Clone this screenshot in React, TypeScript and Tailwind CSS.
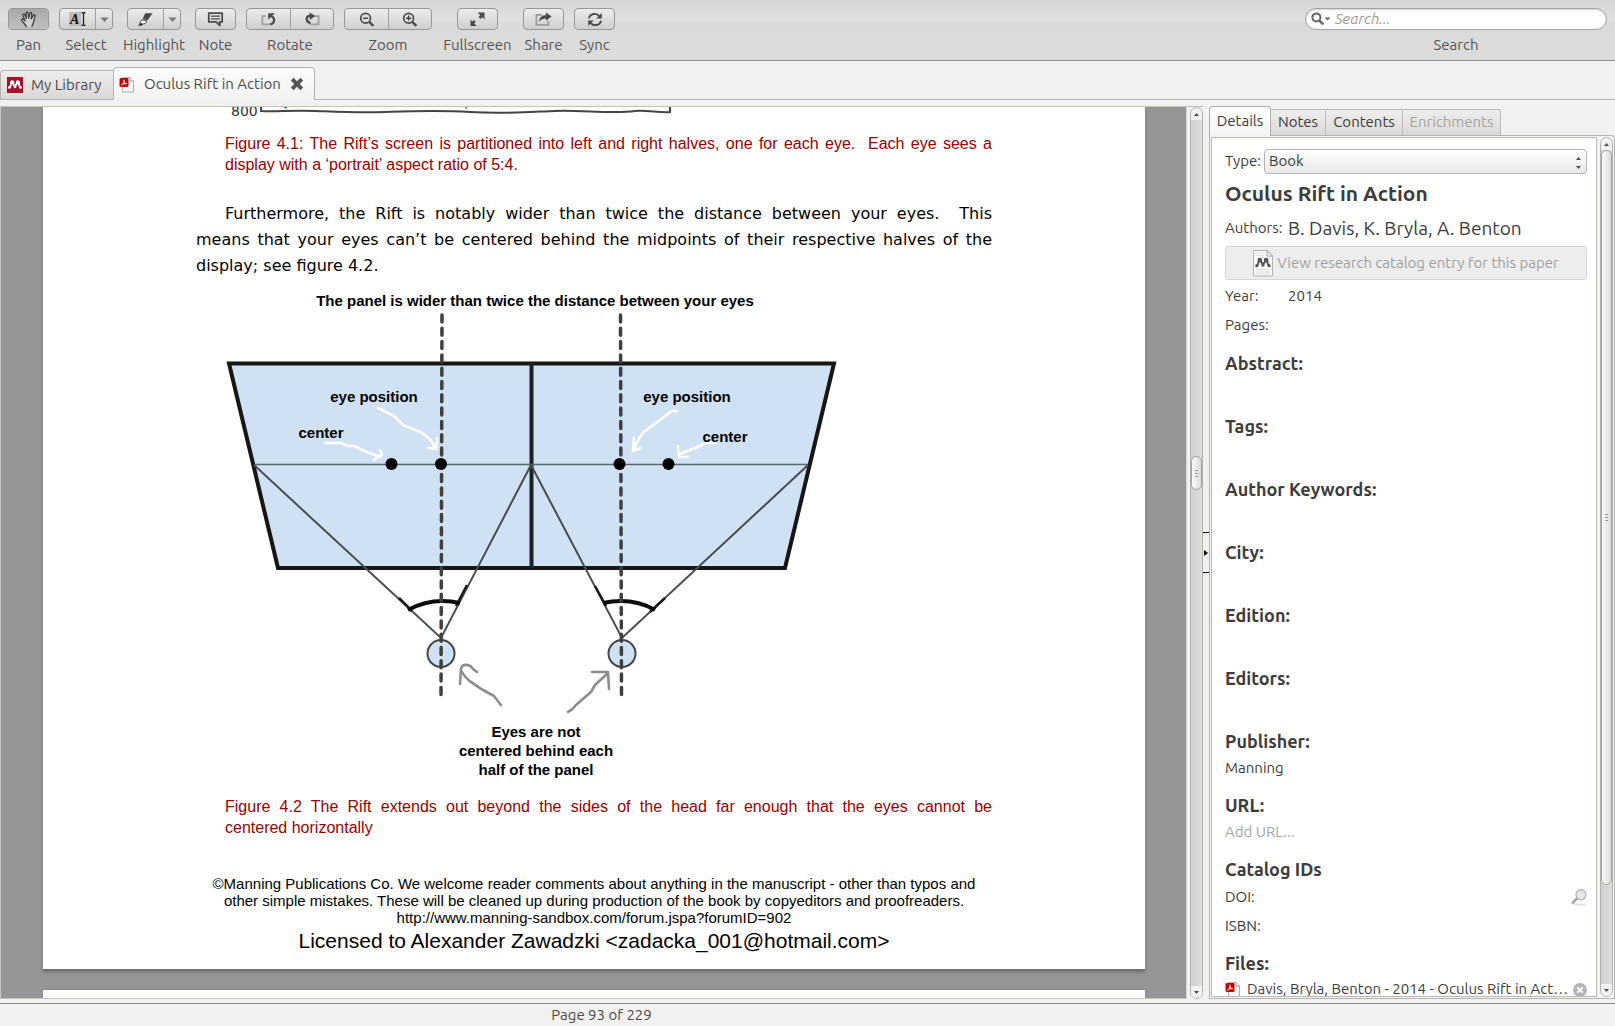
import React from "react";

const ink = "#4a4a4a";

function Caret() {
  return (
    <svg width="9" height="5" viewBox="0 0 9 5" aria-hidden="true">
      <path d="M0.5 0.5h8L4.5 5z" fill="#7a7a7a" />
    </svg>
  );
}

function PanIcon() {
  return (
    <svg width="18" height="17" viewBox="0 0 18 17" fill="none" stroke="#3f3f3f" strokeWidth="1.3" strokeLinecap="round" strokeLinejoin="round">
      <path
        d="M6.2 15.5C5.8 13.6 3.6 12 2 9.8C0.9 8.3 2.2 7.4 3.4 8.4L5 9.8L3 4.4C2.6 2.9 4.2 2.5 4.7 3.8L6.4 7.6L6 2.3C6 0.8 7.8 0.7 8 2.2L8.8 7.2L9.8 2.2C10.2 0.8 11.9 1.1 11.7 2.6L11.2 7.8L13.4 4.2C14.2 3 15.7 3.9 15.1 5.2C14 7.6 14.2 9.2 13.6 11C13.2 12.4 12.2 13.4 12 15.5"
        fill="#d2d2d2"
      />
    </svg>
  );
}

function SelectIcon() {
  return (
    <svg width="18" height="16" viewBox="0 0 18 16" aria-hidden="true">
      <rect x="0" y="1" width="12" height="14" fill="#bdbdbd" />
      <text x="1" y="13" fontFamily="Liberation Serif, serif" fontSize="14" fontWeight="700" fontStyle="italic" fill="#111">A</text>
      <path d="M12.5 1.5c1.5 0 2 .4 2 1.2c0-.8.5-1.2 2-1.2M14.5 2.5v11M12.5 14.5c1.5 0 2-.4 2-1.2c0 .8.5 1.2 2 1.2" fill="none" stroke="#222" strokeWidth="1.3" />
    </svg>
  );
}

function HighlightIcon() {
  return (
    <svg width="17" height="15" viewBox="0 0 17 15" aria-hidden="true">
      <path d="M8.2 1.2h7.3L10.6 8.2L5.6 7z" fill="#4a4a4a" />
      <path d="M5 7.8l5 1.2l-1.8 2.6L5 12.2L2.6 11z" fill="#fafafa" stroke="#4a4a4a" strokeWidth="1" />
      <path d="M1 13.8l2.6-3l2.4 1.6l-1.5 1.4z" fill="#333" />
    </svg>
  );
}

function NoteIcon() {
  return (
    <svg width="17" height="15" viewBox="0 0 17 15" fill="none" stroke={ink}>
      <path d="M1.8 1.2h13.4v8.6h-2.4v3.6L9.2 9.8H1.8z" strokeWidth="1.8" strokeLinejoin="round" />
      <path d="M4 4.2h9M4 6.8h9" strokeWidth="1.2" />
    </svg>
  );
}

function RotateLeftIcon() {
  return (
    <svg width="15" height="14" viewBox="0 0 15 14" fill="none">
      <path d="M5 4.2H1.4v8.2h8.2V11" stroke="#a0a0a0" strokeWidth="1.8" />
      <path d="M9.5 12.4c4.4-1 5-6.6.6-8.4" stroke={ink} strokeWidth="2.2" />
      <path d="M7.2 1.2h6.6L7.2 7.8z" fill={ink} />
    </svg>
  );
}

function RotateRightIcon() {
  return (
    <svg width="15" height="14" viewBox="0 0 15 14" fill="none">
      <path d="M10 4.2h3.6v8.2H5.4V11" stroke="#a0a0a0" strokeWidth="1.8" />
      <path d="M5.4 11C0.6 10 0.4 4.2 5 3.6" stroke={ink} strokeWidth="2.2" />
      <path d="M4.6 0.4L10.4 4L4.6 8z" fill={ink} />
    </svg>
  );
}

function ZoomIcon({ plus }: { plus?: boolean }) {
  return (
    <svg width="16" height="15" viewBox="0 0 16 15" fill="none" stroke={ink}>
      <circle cx="6.6" cy="6.2" r="4.9" strokeWidth="1.7" />
      <path d="M10.2 9.8l4.2 4" strokeWidth="2.4" />
      <path d={plus ? "M4 6.2h5.2M6.6 3.6v5.2" : "M4 6.2h5.2"} strokeWidth="1.5" />
    </svg>
  );
}

function FullscreenIcon() {
  return (
    <svg width="15" height="15" viewBox="0 0 15 15" fill={ink}>
      <path d="M7.5 0.5h7v7l-2.2-2.2l-1.8 1.8l-2-2l1.8-1.8z" />
      <path d="M0.5 7.8l1.8 1.8l1.6-1.6l1.8 1.8L4.2 11.4l2.4 2.6H0.5z" />
    </svg>
  );
}

function ShareIcon() {
  return (
    <svg width="17" height="14" viewBox="0 0 17 14" fill="none">
      <path d="M6.5 3H1.4v9.8h12V9" stroke="#9c9c9c" strokeWidth="1.8" />
      <path d="M4.2 10C4.4 5.6 6.6 3.2 11 3V0.4L16.6 4.6L11 8.8V6.4C8 6.4 6 7.2 4.2 10z" fill={ink} />
    </svg>
  );
}

function SyncIcon() {
  return (
    <svg width="16" height="15" viewBox="0 0 16 15" fill="none">
      <path d="M2 6.4C2.8 1.4 9.4 0.4 12.4 4.2M14 8.6C13.2 13.6 6.6 14.6 3.6 10.8" stroke={ink} strokeWidth="1.9" />
      <path d="M14.8 1v5.4H9.2zM1.2 14V8.6h5.6z" fill={ink} />
    </svg>
  );
}

type ToolProps = { label: string; width: string; children: React.ReactNode };

function Tool({ label, width, children }: ToolProps) {
  return (
    <div className={"flex flex-col items-center gap-[5px] " + width}>
      <div className="flex h-[22px] overflow-hidden rounded-[4px] border border-[#979797] bg-gradient-to-b from-[#ececec] to-[#cfcfcf]">{children}</div>
      <span className="text-[15px] leading-5 whitespace-nowrap text-[#555]">{label}</span>
    </div>
  );
}

function ToolButton({ label, width = "w-[39px]", pressed, children }: { label: string; width?: string; pressed?: boolean; children: React.ReactNode }) {
  return (
    <button
      aria-label={label}
      aria-pressed={pressed}
      className={"flex items-center justify-center border-l border-[#a0a0a0] first:border-l-0 " + width + (pressed ? " bg-gradient-to-b from-[#a9a9a9] to-[#bfbfbf]" : "")}
    >
      {children}
    </button>
  );
}

function PdfIcon() {
  return (
    <svg width="16" height="17" viewBox="0 0 16 17" aria-hidden="true" className="shrink-0">
      <path d="M3.5 1.5h7.5l3.5 3.5v11h-11z" fill="#f4f8f8" stroke="#9db5b8" />
      <path d="M11 1.5V5h3.5" fill="#fff" stroke="#7fa0a5" />
      <rect x="0.5" y="2" width="9" height="9" rx="1.4" fill="#c80000" />
      <path d="M2.4 9.2C4 8.6 5.4 6 4.9 3.8C5 6.4 6.4 7.8 7.8 7.8C5.8 7.4 3.8 7.8 2.4 9.2z" fill="#fff" stroke="#fff" strokeWidth="0.7" />
    </svg>
  );
}

function MendeleyMark({ fill }: { fill: string }) {
  return (
    <g fill={fill}>
      <circle cx="5.2" cy="5.4" r="2.1" />
      <circle cx="10.8" cy="5.4" r="2.1" />
      <circle cx="8" cy="10" r="1.3" />
      <circle cx="2.5" cy="10.4" r="1.4" />
      <circle cx="13.5" cy="10.4" r="1.4" />
      <path d="M2.6 10.4C4.4 9.4 3.4 7.6 4.4 6M13.4 10.4C11.6 9.4 12.6 7.6 11.6 6M6 6.2L8 9.8M10 6.2L8 9.8" fill="none" stroke={fill} strokeWidth="1.8" strokeLinecap="round" />
    </g>
  );
}

function LibraryIcon() {
  return (
    <svg width="16" height="16" viewBox="0 0 16 16" aria-hidden="true">
      <rect width="16" height="16" fill="#a6122d" />
      <MendeleyMark fill="#fff" />
    </svg>
  );
}

function CatalogIcon() {
  return (
    <svg width="20" height="27" viewBox="0 0 20 27" aria-hidden="true">
      <path d="M0.5 0.5h13.5l5.5 5.5v20H0.5z" fill="#fafafa" stroke="#b2b2b2" />
      <path d="M14 0.5V6h5.5z" fill="#fff" stroke="#999" />
      <path d="M3 3h9M3 5.5h9M3 19.5h14M3 22h14M3 24h14" stroke="#ddd" />
      <g transform="translate(1 4) scale(1.12)">
        <MendeleyMark fill="#555" />
      </g>
    </svg>
  );
}

function Arrow({ up }: { up?: boolean }) {
  return (
    <svg width="5" height="3" viewBox="0 0 5 3" aria-hidden="true">
      <path d={up ? "M0 3L2.5 0L5 3z" : "M0 0h5L2.5 3z"} fill="#4d4d4d" />
    </svg>
  );
}

function Scrollbar({ before, thumb, after }: { before: string; thumb: string; after: string }) {
  return (
    <div className="flex w-[13px] shrink-0 flex-col overflow-hidden rounded-full border border-[#b5b1ad] bg-gradient-to-r from-[#d2d0ce] to-[#e0dedc]">
      <button aria-label="Scroll up" className="flex h-3 shrink-0 items-center justify-center bg-[#f3f2f1]">
        <Arrow up />
      </button>
      <div className={before} />
      <div className={"flex shrink-0 flex-col items-center justify-center gap-[2px] rounded-full border border-[#a6a29e] bg-gradient-to-r from-[#fbfbfb] to-[#dedcda] " + thumb}>
        <i className="h-px w-[3px] bg-[#999]" />
        <i className="h-px w-[3px] bg-[#999]" />
        <i className="h-px w-[3px] bg-[#999]" />
      </div>
      <div className={after} />
      <button aria-label="Scroll down" className="flex h-3 shrink-0 items-center justify-center bg-[#f3f2f1]">
        <Arrow />
      </button>
    </div>
  );
}

function Toolbar() {
  return (
    <header className="flex h-[61px] shrink-0 justify-between border-b border-[#8c8c9a] bg-[linear-gradient(#d6d6d6_0px,#e1e1e1_21px,#dadada_22px,#dcdcdc_60px)] pt-2 pr-2 pl-2">
      <div className="flex gap-[10px]">
        <Tool label="Pan" width="w-[41px]">
          <ToolButton label="Pan" pressed><PanIcon /></ToolButton>
        </Tool>
        <Tool label="Select" width="w-[54px]">
          <ToolButton label="Select text" width="w-[35px]"><SelectIcon /></ToolButton>
          <ToolButton label="Select options" width="w-[17px]"><Caret /></ToolButton>
        </Tool>
        <Tool label="Highlight" width="w-[62px]">
          <ToolButton label="Highlight" width="w-[35px]"><HighlightIcon /></ToolButton>
          <ToolButton label="Highlight options" width="w-[17px]"><Caret /></ToolButton>
        </Tool>
        <Tool label="Note" width="w-[41px]">
          <ToolButton label="Note"><NoteIcon /></ToolButton>
        </Tool>
        <Tool label="Rotate" width="w-[88px]">
          <ToolButton label="Rotate left" width="w-[43px]"><RotateLeftIcon /></ToolButton>
          <ToolButton label="Rotate right" width="w-[43px]"><RotateRightIcon /></ToolButton>
        </Tool>
        <Tool label="Zoom" width="w-[88px]">
          <ToolButton label="Zoom out" width="w-[43px]"><ZoomIcon /></ToolButton>
          <ToolButton label="Zoom in" width="w-[43px]"><ZoomIcon plus /></ToolButton>
        </Tool>
        <Tool label="Fullscreen" width="w-[71px]">
          <ToolButton label="Fullscreen"><FullscreenIcon /></ToolButton>
        </Tool>
        <Tool label="Share" width="w-[41px]">
          <ToolButton label="Share"><ShareIcon /></ToolButton>
        </Tool>
        <Tool label="Sync" width="w-[41px]">
          <ToolButton label="Sync"><SyncIcon /></ToolButton>
        </Tool>
      </div>
      <div className="flex w-[302px] flex-col items-center gap-[5px]">
        <div className="flex h-[22px] w-full items-center rounded-full border border-[#a3a3a3] bg-white pl-[5px] shadow-[inset_0_1px_2px_#d0d0d0]">
          <svg width="20" height="14" viewBox="0 0 20 14" fill="none" aria-hidden="true" className="shrink-0">
            <circle cx="5.4" cy="5.4" r="4" stroke="#666" strokeWidth="2" />
            <path d="M8.4 8.6l3.8 3.8" stroke="#666" strokeWidth="2.4" />
            <path d="M13.5 5.5h6l-3 3z" fill="#666" />
          </svg>
          <input id="search" placeholder="Search..." className="ml-1 w-full bg-transparent text-[15px] italic outline-none placeholder:text-[#999]" />
        </div>
        <label htmlFor="search" className="text-[15px] leading-5 text-[#555]">Search</label>
      </div>
    </header>
  );
}

function DocumentTabs() {
  return (
    <nav className="flex h-[39px] shrink-0 items-end border-b border-[#b6b3b0] text-[15px] text-[#4a4a4a]">
      <button className="flex h-[29px] w-[113px] items-center gap-2 rounded-tl-[4px] border-t border-l border-[#b6b3b0] bg-gradient-to-b from-[#efeeed] to-[#dad8d6] pl-[6px] whitespace-nowrap">
        <LibraryIcon />
        My Library
      </button>
      <div className="-mb-px flex h-[33px] w-[202px] items-center rounded-t-[4px] border border-b-0 border-[#b6b3b0] bg-gradient-to-b from-[#fdfdfd] to-[#f2f1f0] pr-[10px] pl-[5px]">
        <PdfIcon />
        <button className="ml-[9px] flex-1 text-left whitespace-nowrap">Oculus Rift in Action</button>
        <button aria-label="Close tab">
          <svg width="14" height="14" viewBox="0 0 14 14">
            <path d="M3.6 0.8L7 4.2l3.4-3.4l2.8 2.8L9.8 7l3.4 3.4l-2.8 2.8L7 9.8l-3.4 3.4l-2.8-2.8L4.2 7L0.8 3.6z" fill="#555" />
          </svg>
        </button>
      </div>
    </nav>
  );
}

function PlotEdge() {
  return (
    <svg width="460" height="18" viewBox="226 107 460 18" className="ml-[30px] block">
      <text x="231" y="116" fontFamily="Verdana, DejaVu Sans, sans-serif" fontSize="14" fill="#333">800</text>
      <path d="M261 107v4c14 1 30-1 55 0s42 2 70 1s50-2 84 0s60 0 85-1s60 3 80 0c12-1 25 2 35 1v-5" fill="none" stroke="#444" strokeWidth="2" />
      <path d="M284 107h3l-1 2z" fill="#0a7a0a" />
      <path d="M466 107v2" stroke="#333" />
    </svg>
  );
}

function Diagram() {
  return (
    <svg width="612" height="500" viewBox="226 288 612 500" className="mt-[9px] ml-[30px] block" fontFamily="Liberation Sans, Arial, sans-serif" fontWeight="700" fontSize="15" role="img" aria-label="Panel width compared with the distance between the eyes">
      <text x="535" y="306" textAnchor="middle">The panel is wider than twice the distance between your eyes</text>
      <path d="M229 363.5H834L785 568H278z" fill="#cfe1f2" stroke="#161616" strokeWidth="4" />
      <path d="M531.5 363V568" stroke="#1c2226" strokeWidth="4" />
      <path d="M254 464.5H808" stroke="#5a6a72" strokeWidth="1.7" />
      <path d="M254 465L441 638L531 465L622 638L808 465" fill="none" stroke="#454d52" strokeWidth="2" />
      <path d="M399 598L412 611M467 585L456 606M595 586L606 606M665 598L650 612" stroke="#1a1a1a" strokeWidth="2.5" />
      <circle cx="441" cy="653.5" r="13.5" fill="#cfe1f2" stroke="#454545" strokeWidth="2" />
      <circle cx="622" cy="653.5" r="13.5" fill="#cfe1f2" stroke="#454545" strokeWidth="2" />
      <path d="M408 610Q432 597 460 603M603 603Q632 597 655 610" fill="none" stroke="#0c0c0c" strokeWidth="4" />
      <path d="M442 315L441 697M620.5 315L621.5 697" stroke="#404040" strokeWidth="3.5" strokeDasharray="7 6.3" strokeLinecap="round" />
      <g fill="#000">
        <circle cx="391.5" cy="464" r="6" />
        <circle cx="441" cy="464" r="6" />
        <circle cx="619.5" cy="464" r="6" />
        <circle cx="668.5" cy="464" r="6" />
      </g>
      <text x="374" y="402" textAnchor="middle">eye position</text>
      <text x="321" y="438" textAnchor="middle">center</text>
      <text x="687" y="402" textAnchor="middle">eye position</text>
      <g fill="none" stroke="#fff" strokeWidth="2.6" strokeLinecap="round" strokeLinejoin="round">
        <path d="M378 408L394 416L403 425L420 432C428 436 433 442 435 448M428 448L436 449L437 438" />
        <path d="M325 443H342L348 446H354C362 450 370 454 381 457M374 460L382 454L380 450" />
        <path d="M677 411H672L645 431C640 435 637 442 634 449M634 438L633 451L641 448" />
        <path d="M716 443H706C698 447 690 450 680 454M678 446L679 457H688" />
      </g>
      <text x="725" y="442" textAnchor="middle">center</text>
      <g fill="none" stroke="#8d8d8d" strokeWidth="2.6" strokeLinecap="round" strokeLinejoin="round">
        <path d="M501 705L494 696L483 690C474 684 466 680 462 672M460 684L461 669C462 663 470 664 473 669L477 672" />
        <path d="M568 712C572 710 574 708 577 704L591 692L595 685L608 673M592 672H608L609 689" />
      </g>
      <text x="536" y="737" textAnchor="middle">Eyes are not</text>
      <text x="536" y="756" textAnchor="middle">centered behind each</text>
      <text x="536" y="775" textAnchor="middle">half of the panel</text>
    </svg>
  );
}

function FullLine({ children }: { children: React.ReactNode }) {
  return <span className="block [text-align-last:justify]">{children}</span>;
}

function Viewer() {
  return (
    <main className="flex min-w-0 flex-1 border-t border-[#c5c1bc]">
      <div className="flex min-w-0 flex-1 flex-col gap-[21px] overflow-hidden border-b border-l border-[#c9c6c2] bg-[#969696] pr-[41px] pl-[42px]">
        <article className="h-[862px] shrink-0 bg-white font-['Liberation_Sans',Arial,sans-serif] text-black shadow-[0_3px_3px_#6c6c6c]">
          <div className="mx-auto max-w-[796px]">
            <PlotEdge />
            <p className="mt-[8px] ml-[29px] text-base leading-[21px] text-[#990000]">
              <FullLine>Figure 4.1: The Rift’s screen is partitioned into left and right halves, one for each eye.&nbsp; Each eye sees a</FullLine>
              display with a ‘portrait’ aspect ratio of 5:4.
            </p>
            <p className="mt-[26px] font-['DejaVu_Sans',Verdana,sans-serif] text-base leading-[26px]">
              <span className="block indent-[29px] [text-align-last:justify]">Furthermore, the Rift is notably wider than twice the distance between your eyes.&nbsp; This</span>
              <FullLine>means that your eyes can’t be centered behind the midpoints of their respective halves of the</FullLine>
              display; see figure 4.2.
            </p>
            <Diagram />
            <p className="mt-[8px] ml-[29px] text-base leading-[21px] text-[#990000]">
              <FullLine>Figure 4.2 The Rift extends out beyond the sides of the head far enough that the eyes cannot be</FullLine>
              centered horizontally
            </p>
            <footer className="mt-[37px] text-center text-[15px] leading-[17px]">
              <p>©Manning Publications Co. We welcome reader comments about anything in the manuscript - other than typos and</p>
              <p>other simple mistakes. These will be cleaned up during production of the book by copyeditors and proofreaders.</p>
              <p>http://www.manning-sandbox.com/forum.jspa?forumID=902</p>
              <p className="text-[21px] leading-[30px]">Licensed to Alexander Zawadzki &lt;zadacka_001@hotmail.com&gt;</p>
            </footer>
          </div>
        </article>
        <div className="min-h-0 flex-1 bg-white shadow-[0_0_2px_#6c6c6c]" />
      </div>
      <div className="flex border-l border-[#d8d5d2] pl-[3px]">
        <Scrollbar before="grow-[336]" thumb="h-[34px]" after="grow-[495]" />
      </div>
    </main>
  );
}

function Field({ label, children }: { label: string; children?: React.ReactNode }) {
  return (
    <div className="flex h-[29px] items-center">
      <span className="w-[63px]">{label}</span>
      {children}
    </div>
  );
}

function Section({ title, children }: { title: string; children?: React.ReactNode }) {
  return (
    <section>
      <h3 className="text-lg leading-6 font-bold">{title}</h3>
      <div className={children ? "mb-[11px] h-[29px] leading-[29px]" : "h-[39px]"}>{children}</div>
    </section>
  );
}

function SideTab({ label, disabled, width }: { label: string; disabled?: boolean; width: string }) {
  return (
    <button disabled={disabled} className={"h-[26px] border-t border-r border-[#bcb9b6] bg-gradient-to-b from-[#efeeed] to-[#dbd9d7] pb-px disabled:text-[#a5a3a1] " + width}>
      {label}
    </button>
  );
}

function Sidebar() {
  return (
    <aside className="flex w-[406px] shrink-0 flex-col text-[15px] text-[#3c3c3c]">
      <div className="flex h-[29px] shrink-0 items-end">
        <button className="relative -mb-px h-[30px] w-[62px] rounded-t-[4px] border border-b-0 border-[#b0adaa] bg-gradient-to-b from-[#fdfdfd] to-[#f5f4f3] pb-px">Details</button>
        <SideTab label="Notes" width="w-[55px]" />
        <SideTab label="Contents" width="w-[77px]" />
        <SideTab label="Enrichments" width="w-[98px] rounded-tr-[3px]" disabled />
      </div>
      <div className="flex min-h-0 flex-1 rounded-tr-[4px] border border-[#b6b3b0] bg-[#f5f4f3] p-px">
        <div className="min-w-0 flex-1 overflow-hidden border border-[#bcb9b5] bg-white pt-[11px] pr-[9px] pl-[13px]">
          <div className="flex h-[25px] items-center gap-[3px]">
            <label htmlFor="type">Type:</label>
            <div className="relative h-full flex-1">
              <select id="type" className="h-full w-full appearance-none rounded-[4px] border border-[#b5b2af] bg-gradient-to-b from-white to-[#e9e8e7] pl-1 text-[15px]">
                <option>Book</option>
              </select>
              <span className="pointer-events-none absolute top-2 right-[6px] flex flex-col gap-[6px]">
                <Arrow up />
                <Arrow />
              </span>
            </div>
          </div>
          <h2 className="text-[21px] leading-[39px] font-bold">Oculus Rift in Action</h2>
          <div className="flex h-[30px] items-center">
            <span className="w-[63px]">Authors:</span>
            <span className="text-[19px] whitespace-nowrap">B. Davis, K. Bryla, A. Benton</span>
          </div>
          <button disabled className="mt-[3px] mb-[2px] flex h-[34px] w-full items-center justify-center gap-1 rounded-[3px] border border-[#d6d6d6] bg-[#ededed] text-[#a0a0a0]">
            <CatalogIcon />
            View research catalog entry for this paper
          </button>
          <Field label="Year:">2014</Field>
          <Field label="Pages:" />
          <div className="mt-[11px]">
            <Section title="Abstract:" />
            <Section title="Tags:" />
            <Section title="Author Keywords:" />
            <Section title="City:" />
            <Section title="Edition:" />
            <Section title="Editors:" />
            <Section title="Publisher:">Manning</Section>
            <Section title="URL:">
              <button className="text-[#a3a3a3]">Add URL...</button>
            </Section>
            <h3 className="mb-[2px] text-lg leading-6 font-bold">Catalog IDs</h3>
            <div className="flex items-center justify-between">
              <Field label="DOI:" />
              <button aria-label="Look up DOI">
                <svg width="16" height="17" viewBox="0 0 16 17" fill="none">
                  <path d="M3 15.5h12" stroke="#e2e2e2" strokeWidth="2" />
                  <path d="M6.5 9L1 14.5" stroke="#a8a8a8" strokeWidth="2.6" />
                  <circle cx="10" cy="5.8" r="5" fill="#e9e9e9" stroke="#b8b8b8" strokeWidth="1.4" />
                </svg>
              </button>
            </div>
            <Field label="ISBN:" />
            <h3 className="mt-[10px] text-lg leading-6 font-bold">Files:</h3>
            <div className="flex h-[29px] items-center gap-[6px]">
              <PdfIcon />
              <a href="#file" className="-mr-1 min-w-0 flex-1 truncate">Davis, Bryla, Benton - 2014 - Oculus Rift in Action.pdf</a>
              <button aria-label="Remove file">
                <svg width="14" height="14" viewBox="0 0 14 14">
                  <circle cx="7" cy="7" r="7" fill="#b4b4b4" />
                  <path d="M4.3 4.3l5.4 5.4M9.7 4.3l-5.4 5.4" stroke="#fff" strokeWidth="1.8" />
                </svg>
              </button>
            </div>
          </div>
        </div>
        <div className="flex pl-[3px]">
          <Scrollbar before="grow-0" thumb="grow-[733]" after="grow-[100]" />
        </div>
      </div>
    </aside>
  );
}

export default function App() {
  return (
    <div className="flex h-screen flex-col overflow-hidden bg-[#f2f1f0] font-['Ubuntu','Noto_Sans',sans-serif]">
      <Toolbar />
      <DocumentTabs />
      <div className="mt-[6px] flex min-h-0 flex-1">
        <Viewer />
        <div className="flex w-[6px] shrink-0 flex-col justify-center">
          <button aria-label="Collapse details" className="flex h-[41px] items-center justify-center border-y border-black">
            <svg width="4" height="6" viewBox="0 0 4 6"><path d="M0 0l4 3l-4 3z" fill="#000" /></svg>
          </button>
        </div>
        <Sidebar />
      </div>
      <footer className="mt-1 flex h-[23px] shrink-0 items-center border-t border-[#8f8c89] text-[15px] text-[#4a4a4a]">
        <span className="w-[1203px] text-center">Page 93 of 229</span>
      </footer>
    </div>
  );
}
